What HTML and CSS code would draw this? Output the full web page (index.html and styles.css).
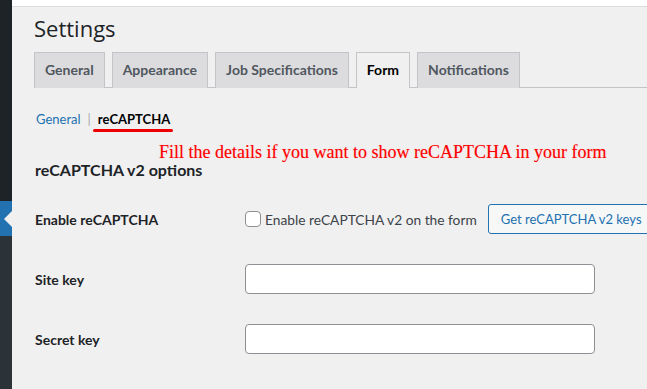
FILE: index.html
```html
<!DOCTYPE html>
<html lang="en">
<head>
<meta charset="utf-8">
<title>Settings</title>
<link rel="stylesheet" href="styles.css">
</head>
<body>
<div class="layout">
  <aside class="sidebar">
    <div class="menu-top"></div>
    <div class="menu-current"><span class="arrow"></span></div>
    <div class="menu-rest"></div>
  </aside>
  <div class="content">
    <div class="topbar"></div>
    <div class="wrap">
      <h1 class="title">Settings</h1>
      <nav class="tabs">
        <a class="tab">General</a>
        <a class="tab">Appearance</a>
        <a class="tab">Job Specifications</a>
        <a class="tab tab-active">Form</a>
        <a class="tab">Notifications</a>
      </nav>
      <div class="subnav">
        <a class="sub-link">General</a>
        <span class="sep">|</span>
        <span class="sub-current">reCAPTCHA</span>
      </div>
      <p class="note">Fill the details if you want to show reCAPTCHA in your form</p>
      <h2 class="section-title">reCAPTCHA v2 options</h2>
      <div class="form-grid">
        <div class="label">Enable reCAPTCHA</div>
        <div class="field">
          <label class="check"><span class="box"></span>Enable reCAPTCHA v2 on the form</label>
          <span class="button">Get reCAPTCHA v2 keys</span>
        </div>
        <div class="label">Site key</div>
        <div class="field"><span class="input"></span></div>
        <div class="label">Secret key</div>
        <div class="field"><span class="input"></span></div>
      </div>
    </div>
  </div>
</div>
</body>
</html>
```
FILE: styles.css
```css
* { box-sizing: border-box; }
html, body { margin: 0; padding: 0; }
body {
  background: #f0f0f0;
  font-family: "Lato", "Open Sans", sans-serif;
  color: #1d2327;
  width: 647px;
  height: 389px;
  overflow: hidden;
}
.layout { display: flex; height: 389px; }
.sidebar {
  width: 12px;
  flex: none;
  display: flex;
  flex-direction: column;
  background: #1d2327;
}
.menu-top { height: 201px; background: #1d2327; }
.menu-current {
  height: 35px;
  background: #2271b1;
  position: relative;
}
.arrow {
  position: absolute;
  right: 0;
  top: 10px;
  width: 0;
  height: 0;
  border-top: 8px solid transparent;
  border-bottom: 8px solid transparent;
  border-right: 8px solid #f0f0f0;
}
.menu-rest { flex: 1; background: #2c3338; }
.content { flex: 1; display: flex; flex-direction: column; }
.topbar { height: 7px; background: #fff; border-bottom: 1px solid #dcdcde; }
.wrap { padding-left: 22px; }
.title {
  margin: 0;
  padding-top: 6px;
  font-family: "Open Sans", sans-serif;
  font-size: 22px;
  font-weight: 400;
  line-height: 30px;
  color: #1d2327;
}
.tabs {
  display: flex;
  margin-top: 9px;
  border-bottom: 1px solid #c3c4c7;
  height: 36px;
}
.tab {
  display: block;
  margin-right: 7px;
  padding: 5px 10px;
  height: 36px;
  font-size: 14px;
  font-weight: 700;
  line-height: 24px;
  color: #50575e;
  background: #dcdcde;
  border: 1px solid #c3c4c7;
  border-bottom: none;
}
.tab-active {
  background: #f0f0f0;
  color: #000;
  height: 36px;
  margin-bottom: -1px;
}
.subnav {
  margin-top: 21px;
  margin-left: 2px;
  font-size: 13px;
  line-height: 20px;
  display: flex;
  gap: 7px;
}
.sub-link { color: #2271b1; }
.sep { color: #a7aaad; }
.sub-current {
  position: relative;
  font-weight: 700;
  color: #000;
}
.sub-current::after {
  content: "";
  position: absolute;
  left: -5px;
  right: -3px;
  bottom: -3px;
  height: 3px;
  background: #e00;
  border-radius: 2px;
}
.note {
  margin: 13px 0 0 125px;
  font-family: "Liberation Serif", serif;
  font-size: 18px;
  line-height: 20px;
  color: #f00;
  text-shadow: 0 0 1px rgba(255,0,0,0.3);
}
.section-title {
  margin: -2px 0 0 1px;
  font-size: 16px;
  font-weight: 700;
  line-height: 20px;
  color: #1d2327;
}
.form-grid {
  display: grid;
  grid-template-columns: 210px 1fr;
  grid-auto-rows: 60px;
  align-items: center;
  margin: 9px 0 0 1px;
}
.label { font-size: 14px; font-weight: 700; color: #1d2327; }
.field { display: flex; align-items: center; }
.check {
  display: flex;
  align-items: center;
  gap: 4px;
  font-size: 13.75px;
  color: #3c434a;
  white-space: nowrap;
}
.box {
  width: 16px;
  height: 16px;
  border: 1px solid #8c8f94;
  border-radius: 4px;
  background: #fff;
}
.button {
  margin-left: 11px;
  height: 30px;
  padding: 0 12px;
  display: flex;
  align-items: center;
  white-space: nowrap;
  font-size: 13px;
  color: #2271b1;
  background: #f6f7f7;
  border: 1px solid #2271b1;
  border-radius: 3px;
}
.input {
  width: 350px;
  height: 30px;
  background: #fff;
  border: 1px solid #8c8f94;
  border-radius: 4px;
}
```
